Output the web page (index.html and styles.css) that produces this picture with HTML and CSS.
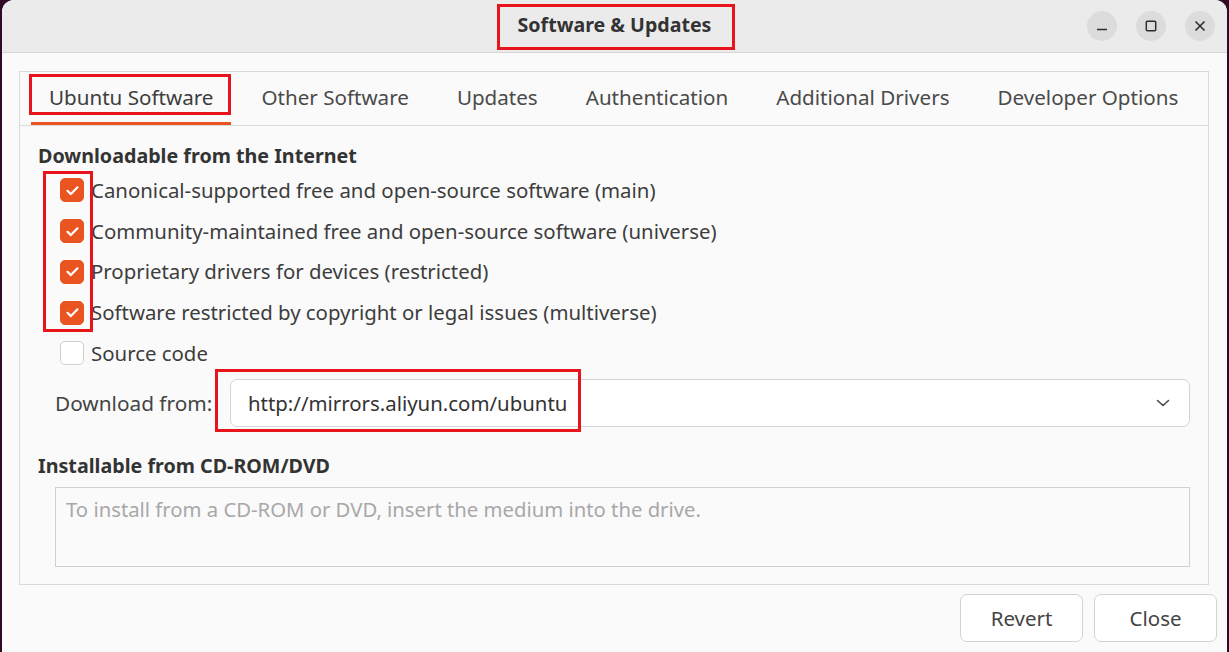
FILE: index.html
```html
<!DOCTYPE html>
<html lang="en">
<head>
<meta charset="utf-8">
<title>Software &amp; Updates</title>
<link rel="stylesheet" href="styles.css">
</head>
<body>
<div class="desktop">
  <div class="window">
    <header class="titlebar">
      <div class="tb-left"></div>
      <div class="title">Software &amp; Updates</div>
      <div class="wm-buttons">
        <span class="wm-btn"><svg width="14" height="14" viewBox="0 0 14 14"><path d="M2 10.5h10" stroke="#2e2e2e" stroke-width="1.6" fill="none"/></svg></span>
        <span class="wm-btn"><svg width="14" height="14" viewBox="0 0 14 14"><rect x="2.3" y="2.3" width="9.4" height="9.4" rx="1" stroke="#2e2e2e" stroke-width="1.5" fill="none"/></svg></span>
        <span class="wm-btn"><svg width="14" height="14" viewBox="0 0 14 14"><path d="M2.5 2.5l9 9M11.5 2.5l-9 9" stroke="#2e2e2e" stroke-width="1.6" fill="none"/></svg></span>
      </div>
    </header>
    <main class="content">
      <section class="notebook">
        <nav class="tabs">
          <span class="tab active">Ubuntu Software</span>
          <span class="tab">Other Software</span>
          <span class="tab">Updates</span>
          <span class="tab">Authentication</span>
          <span class="tab">Additional Drivers</span>
          <span class="tab">Developer Options</span>
        </nav>
        <div class="page">
          <h2 class="heading">Downloadable from the Internet</h2>
          <div class="checks">
            <label class="check-row"><span class="box checked"><svg width="23" height="23" viewBox="0 0 23 23"><path d="M6.5 11.8l3.4 3.3 6.6-6.8" stroke="#fff" stroke-width="2.2" fill="none" stroke-linecap="round" stroke-linejoin="round"/></svg></span><span class="check-label">Canonical-supported free and open-source software (main)</span></label>
            <label class="check-row"><span class="box checked"><svg width="23" height="23" viewBox="0 0 23 23"><path d="M6.5 11.8l3.4 3.3 6.6-6.8" stroke="#fff" stroke-width="2.2" fill="none" stroke-linecap="round" stroke-linejoin="round"/></svg></span><span class="check-label">Community-maintained free and open-source software (universe)</span></label>
            <label class="check-row"><span class="box checked"><svg width="23" height="23" viewBox="0 0 23 23"><path d="M6.5 11.8l3.4 3.3 6.6-6.8" stroke="#fff" stroke-width="2.2" fill="none" stroke-linecap="round" stroke-linejoin="round"/></svg></span><span class="check-label">Proprietary drivers for devices (restricted)</span></label>
            <label class="check-row"><span class="box checked"><svg width="23" height="23" viewBox="0 0 23 23"><path d="M6.5 11.8l3.4 3.3 6.6-6.8" stroke="#fff" stroke-width="2.2" fill="none" stroke-linecap="round" stroke-linejoin="round"/></svg></span><span class="check-label">Software restricted by copyright or legal issues (multiverse)</span></label>
            <label class="check-row"><span class="box"></span><span class="check-label">Source code</span></label>
          </div>
          <div class="download-row">
            <span class="download-label">Download from:</span>
            <div class="combo">
              <span class="combo-text">http://mirrors.aliyun.com/ubuntu</span>
              <svg class="chevron" width="16" height="16" viewBox="0 0 16 16"><path d="M2.5 5.5l5.5 5 5.5-5" stroke="#4a4a4a" stroke-width="1.6" fill="none" stroke-linecap="round" stroke-linejoin="round"/></svg>
            </div>
          </div>
          <h2 class="heading heading-cd">Installable from CD-ROM/DVD</h2>
          <div class="cdbox">To install from a CD-ROM or DVD, insert the medium into the drive.</div>
        </div>
      </section>
      <div class="actions">
        <button class="btn">Revert</button>
        <button class="btn">Close</button>
      </div>
    </main>
    <div class="mark mark-title"></div>
    <div class="mark mark-tab"></div>
    <div class="mark mark-checks"></div>
    <div class="mark mark-url"></div>
  </div>
</div>
</body>
</html>
```

FILE: styles.css
```css
* { box-sizing: border-box; }

html, body {
  margin: 0;
  padding: 0;
  width: 1229px;
  height: 652px;
  overflow: hidden;
}

body {
  background: #300a24;
  font-family: "Noto Sans", "DejaVu Sans", sans-serif;
  color: #3d3d3d;
}

.desktop {
  padding-left: 2px;
}

.window {
  position: relative;
  width: 1225px;
  height: 680px;
  background: #fafafa;
  border-radius: 12px 12px 0 0;
  overflow: hidden;
}

.titlebar {
  height: 53px;
  background: #ebebeb;
  border-bottom: 1px solid #d5d5d5;
  display: grid;
  grid-template-columns: 1fr auto 1fr;
  align-items: center;
}

.title {
  font-weight: 700;
  font-size: 19.6px;
  color: #333;
  padding-bottom: 3px;
}

.wm-buttons {
  display: flex;
  justify-content: flex-end;
  gap: 19px;
  padding-right: 12px;
}

.wm-btn {
  width: 30px;
  height: 30px;
  border-radius: 50%;
  background: #dcdcdc;
  display: flex;
  align-items: center;
  justify-content: center;
}

.content {
  padding: 18px 18px 0 17px;
}

.notebook {
  border: 1px solid #dadada;
  background: #fafafa;
}

.tabs {
  display: flex;
  gap: 12px;
  padding-left: 11px;
  height: 54px;
  border-bottom: 1px solid #dadada;
}

.tab {
  height: 53px;
  padding: 0 18px 4px;
  display: flex;
  align-items: center;
  font-size: 20.6px;
  color: #4a4a4a;
}

.tab.active {
  box-shadow: inset 0 -3px 0 #e95420;
  color: #3d3d3d;
}

.page {
  padding: 16px 18px 17px 18px;
}

.heading {
  margin: 0;
  font-size: 19.7px;
  font-weight: 700;
  line-height: 28px;
  color: #333;
}

.checks {
  display: flex;
  flex-direction: column;
  padding-left: 22px;
}

.check-row {
  height: 40.75px;
  display: flex;
  align-items: center;
  gap: 7px;
  font-size: 20.4px;
}

.check-label {
  padding-bottom: 1px;
}

.box {
  width: 24px;
  height: 24px;
  border-radius: 5px;
  border: 1px solid #cfcfcf;
  background: #fff;
  flex: 0 0 24px;
  display: flex;
  align-items: center;
  justify-content: center;
}

.box.checked {
  background: #e95420;
  border-color: #e95420;
}

.box svg { flex: 0 0 auto; }

.download-row {
  display: flex;
  align-items: center;
  margin-top: 5px;
  padding-left: 17px;
}

.download-label {
  flex: 0 0 175px;
  font-size: 20.8px;
  color: #444;
}

.combo {
  flex: 1;
  height: 48px;
  border: 1px solid #d4d4d4;
  border-radius: 7px;
  background: #fff;
  display: flex;
  align-items: center;
  justify-content: space-between;
  padding: 0 18px 0 17px;
}

.combo-text {
  font-size: 20.4px;
  color: #333;
}

.heading-cd {
  margin-top: 25px;
}

.cdbox {
  margin: 7px 0 0 17px;
  height: 80px;
  border: 1px solid #d0d0d0;
  background: #fafafa;
  padding: 6px 10px;
  font-size: 20.3px;
  line-height: 30px;
  color: #a8a8a8;
}

.actions {
  display: flex;
  justify-content: flex-end;
  gap: 11px;
  margin-top: 9px;
  margin-right: -8px;
}

.btn {
  width: 123px;
  height: 48px;
  border: 1px solid #d3d3d3;
  border-radius: 7px;
  background: #fff;
  font-family: "Noto Sans", "DejaVu Sans", sans-serif;
  font-size: 20.5px;
  color: #444;
  padding: 0;
}

.mark {
  position: absolute;
  border: 3px solid #e8141c;
  pointer-events: none;
}

.mark-title { left: 495px; top: 4px; width: 238px; height: 46px; }
.mark-tab { left: 27px; top: 74px; width: 202px; height: 41px; }
.mark-checks { left: 41px; top: 171px; width: 50px; height: 161px; }
.mark-url { left: 213px; top: 369px; width: 366px; height: 63px; }
```
